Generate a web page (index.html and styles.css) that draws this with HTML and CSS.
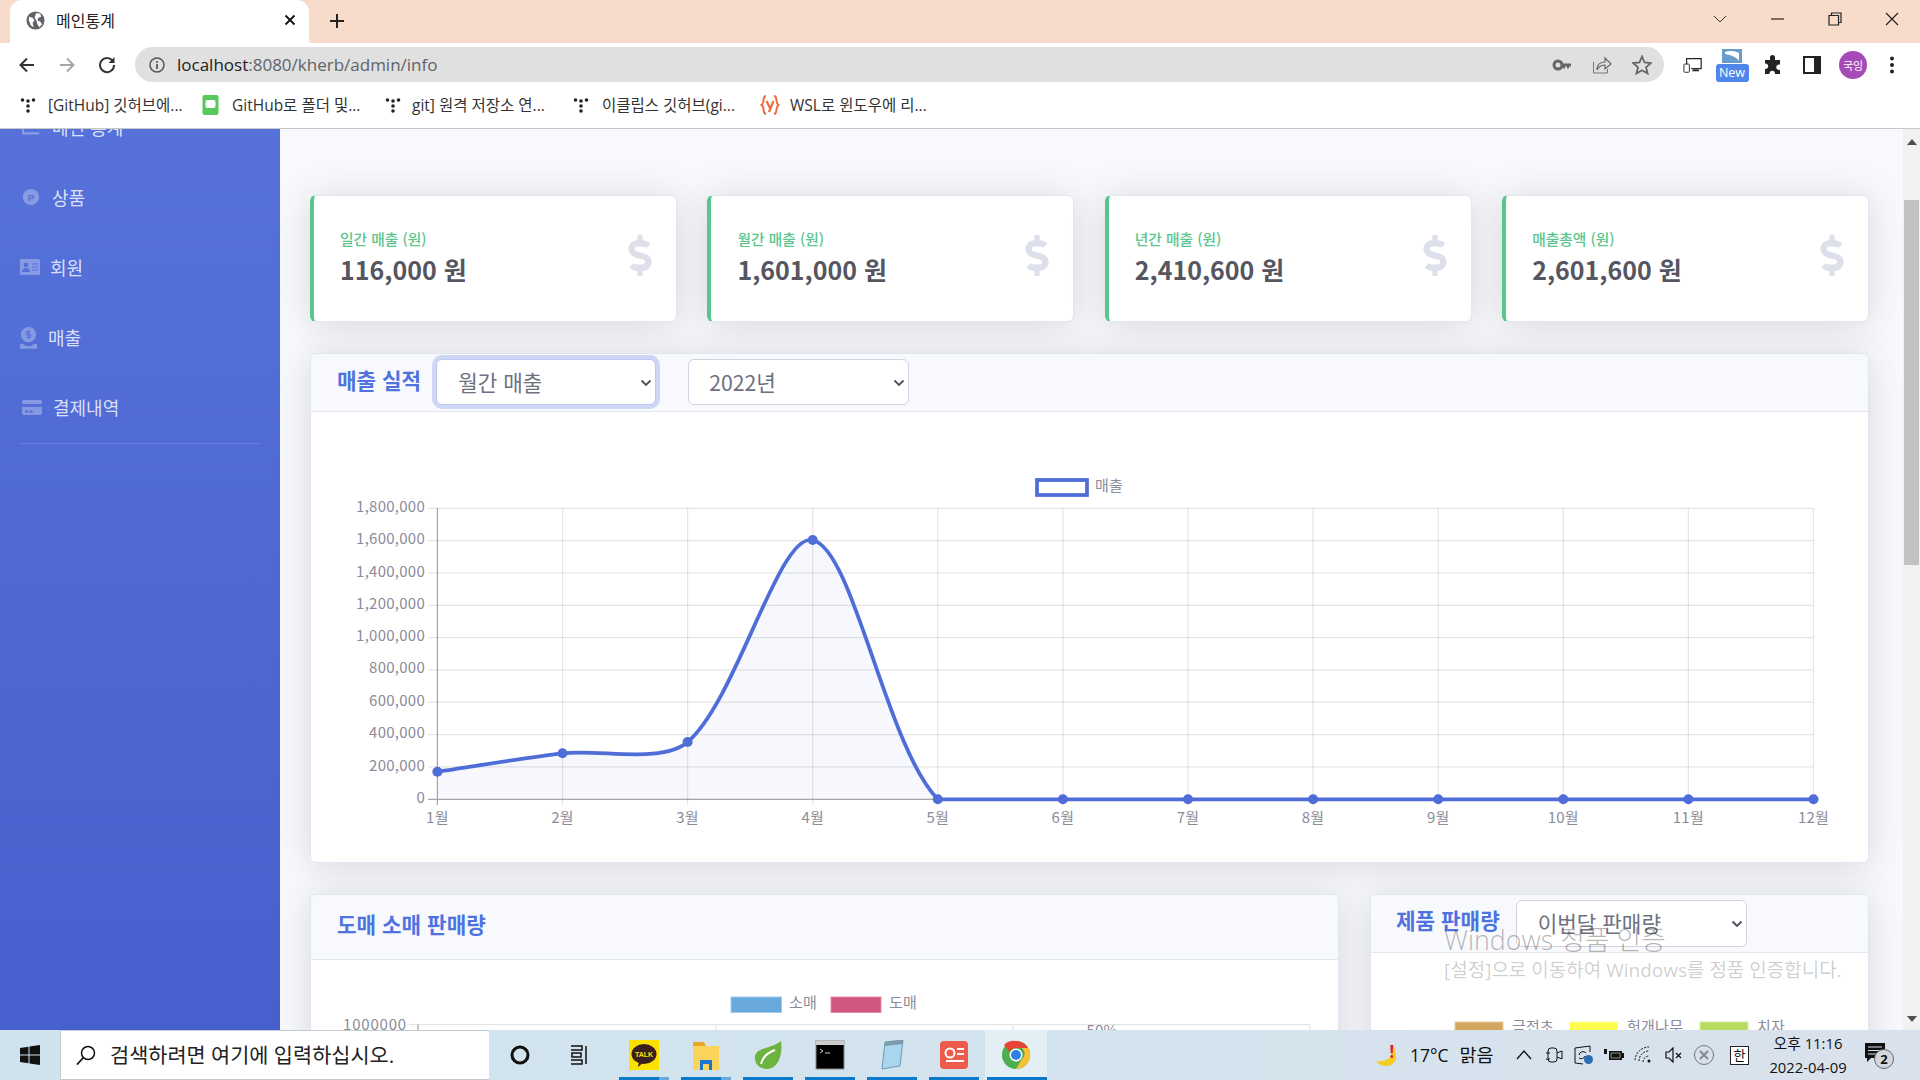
FILE: index.html
```html
<!DOCTYPE html>
<html lang="ko">
<head>
<meta charset="utf-8">
<title>메인통계</title>
<link rel="stylesheet" href="styles.css">
</head>
<body>
<svg class="defs" width="0" height="0" aria-hidden="true">
  <symbol id="dots" viewBox="0 0 16 16"><circle cx="2.5" cy="3" r="1.8"/><circle cx="8" cy="4" r="1.8"/><circle cx="13.500" cy="3" r="1.8"/><circle cx="8" cy="9" r="1.8"/><circle cx="8" cy="14" r="1.8"/></symbol>
  <symbol id="dollar" viewBox="0 0 288 512"><path d="M209.2 233.4l-108-31.6C88.7 198.2 80 186.5 80 173.5c0-16.3 13.2-29.5 29.5-29.5h66.3c12.2 0 24.2 3.7 34.2 10.5 6.1 4.1 14.3 3.1 19.5-2l34.8-34c7.1-6.9 6.1-18.4-1.8-24.5C238 74.8 207.4 64.1 176 64V16c0-8.8-7.2-16-16-16h-32c-8.8 0-16 7.2-16 16v48h-2.5C45.8 64-5.4 118.7.5 183.6c4.2 46.1 39.4 83.6 83.8 96.6l102.5 30c12.5 3.7 21.2 15.3 21.2 28.3 0 16.3-13.2 29.5-29.5 29.5h-66.3C100 368 88 364.3 78 357.5c-6.1-4.1-14.3-3.1-19.5 2l-34.8 34c-7.1 6.9-6.1 18.4 1.8 24.5 24.5 19.2 55.1 29.9 86.5 30v48c0 8.8 7.2 16 16 16h32c8.8 0 16-7.2 16-16v-48.2c46.6-.9 90.3-28.6 105.7-72.7 21.5-61.6-14.6-124.8-72.5-141.7z"/></symbol>
  <symbol id="chev" viewBox="0 0 12 8"><path d="M1.500 1.500 6 6l4.500-4.500" fill="none" stroke="#4d4f5c" stroke-width="1.800"/></symbol>
</svg>

<header class="tabstrip">
  <div class="tab">
    <svg class="tab-fav" viewBox="0 0 20 20"><circle cx="10" cy="10" r="9.500" fill="#5f6368"/><path d="M3 6l4 1 2 3-2 2 1 5-3-2-2-5zM11 2l4 1 1 3-3 1-1 3 3 1 2 3-3 3-2-3-1-4-2-3 1-3z" fill="#fff"/></svg>
    <span class="tab-title">메인통계</span>
    <svg class="tab-x" viewBox="0 0 12 12"><path d="M1.500 1.500l9 9M10.500 1.500l-9 9" stroke="#111" stroke-width="1.800"/></svg>
  </div>
  <svg class="tab-plus" viewBox="0 0 14 14"><path d="M7 0v14M0 7h14" stroke="#222" stroke-width="2"/></svg>
  <div class="win-ctrls">
    <svg class="wc" viewBox="0 0 14 14"><path d="M1 4l6 6 6-6" fill="none" stroke="#333"/></svg>
    <svg class="wc" viewBox="0 0 14 14"><path d="M1 7h13" stroke="#222" stroke-width="1.200"/></svg>
    <svg class="wc" viewBox="0 0 14 14"><path d="M1 3.500h9.500v9.500H1zM3.500 3.500V1H13v9.500h-2.500" fill="none" stroke="#222" stroke-width="1.200"/></svg>
    <svg class="wc" viewBox="0 0 14 14"><path d="M1 1l12 12M13 1L1 13" stroke="#222" stroke-width="1.200"/></svg>
  </div>
</header>

<div class="toolbar">
  <svg class="nav-ic" viewBox="0 0 18 18"><path d="M16 9H3M9 2.500 2.500 9 9 15.500" fill="none" stroke="#333" stroke-width="2"/></svg>
  <svg class="nav-ic" viewBox="0 0 18 18"><path d="M2 9h13M9 2.500 15.500 9 9 15.500" fill="none" stroke="#a6a6a6" stroke-width="2"/></svg>
  <svg class="nav-ic" viewBox="0 0 18 18"><path d="M15 5.500A7 7 0 1 0 16 9" fill="none" stroke="#333" stroke-width="2"/><path d="M16.500 1v6h-6z" fill="#333"/></svg>
  <div class="omnibox">
    <svg class="info" viewBox="0 0 16 16"><circle cx="8" cy="8" r="7" fill="none" stroke="#555" stroke-width="1.500"/><path d="M8 7v5M8 4v1.800" stroke="#555" stroke-width="1.700"/></svg>
    <span class="url"><span class="url-host">localhost</span>:8080/kherb/admin/info</span>
    <svg class="omni-ic" viewBox="0 0 20 20"><circle cx="6" cy="10" r="4" fill="none" stroke="#666" stroke-width="3"/><path d="M9 8.500h10v3h-2v2h-2v-2h-2v2h-2v-2H9z" fill="#666"/></svg>
    <svg class="omni-ic" viewBox="0 0 20 20"><path d="M1.500 7v11h14v-4" fill="none" stroke="#777" stroke-width="1"/><path d="M5 15c0-6 4-8 8-8V3l6 6-6 5V10c-4 0-6 1-8 5z" fill="none" stroke="#666" stroke-width="1.200"/></svg>
    <svg class="omni-ic omni-last" viewBox="0 0 20 20"><path d="M10 1.500l2.500 6 6.500.5-5 4.300 1.600 6.200L10 15.300l-5.600 3.200L6 12.300 1 8l6.500-.5z" fill="none" stroke="#666" stroke-width="1.800"/></svg>
  </div>
  <div class="ext-row">
    <svg class="ext" viewBox="0 0 22 20"><path d="M4 12V3h16v11H9" fill="none" stroke="#222" stroke-width="1.300"/><rect x="1" y="9" width="6" height="9" rx="1" fill="#fff" stroke="#222"/><path d="M11 15h6l1 2h-8z" fill="#222"/></svg>
    <div class="ext-new"><svg class="ext-new-ic" viewBox="0 0 20 14"><rect width="20" height="14" fill="#6a9ccb"/><path d="M3 3c6-2 10-1 14 1v8c-3-4-8-6-14-7z" fill="#fff"/></svg><span class="ext-badge">New</span></div>
    <svg class="ext" viewBox="0 0 20 20"><path d="M7 2.500a2.500 2.500 0 0 1 5 0V5h5v4.500h-1.500a2.800 2.800 0 0 0 0 5.500H17v4h-5v-1a2.800 2.800 0 0 0-5.500 0v1H2v-5h1a2.800 2.800 0 0 0 0-5.500H2V5h5z" fill="#222"/></svg>
    <svg class="ext" viewBox="0 0 20 20"><rect x="1" y="1" width="18" height="18" fill="#222"/><rect x="3" y="3" width="9" height="14" fill="#fff"/></svg>
    <span class="avatar">국잉</span>
    <svg class="ext" viewBox="0 0 20 20"><circle cx="10" cy="3.500" r="2" fill="#222"/><circle cx="10" cy="10" r="2" fill="#222"/><circle cx="10" cy="16.500" r="2" fill="#222"/></svg>
  </div>
</div>

<nav class="bookmarks">
  <a class="bm bm-1"><svg class="bm-ic"><use href="#dots"/></svg><span>[GitHub] 깃허브에...</span></a>
  <a class="bm bm-2"><svg class="bm-ic" viewBox="0 0 16 20"><rect width="16" height="20" rx="2" fill="#5ac85a"/><rect x="3" y="5" width="10" height="8" rx="2" fill="#fff"/></svg><span>GitHub로 폴더 및...</span></a>
  <a class="bm bm-3"><svg class="bm-ic"><use href="#dots"/></svg><span>git] 원격 저장소 연...</span></a>
  <a class="bm bm-4"><svg class="bm-ic"><use href="#dots"/></svg><span>이클립스 깃허브(gi...</span></a>
  <a class="bm bm-5"><svg class="bm-ic bm-ic-y" viewBox="0 0 20 20"><path d="M6 1C2 1 5 8 1.500 10 5 12 2 19 6 19M14 1c4 0 1 7 4.500 9-3.500 2-.5 9-4.500 9" fill="none" stroke="#ef6c3e" stroke-width="2"/><path d="M6.500 6l3.500 7M13.500 6 9 17" fill="none" stroke="#ef6c3e" stroke-width="2.200"/></svg><span>WSL로 윈도우에 리...</span></a>
</nav>

<div class="page">
  <aside class="sidebar">
    <ul class="side-nav">
      <li class="side-item">
        <svg class="side-ic" viewBox="0 0 20 16"><path d="M1 1v14h18M5 5h10M5 9h10" fill="none" stroke="currentColor" stroke-width="2.500"/></svg>
        <span>메인 통계</span>
      </li>
      <li class="side-item">
        <svg class="side-ic" viewBox="0 0 20 20"><circle cx="10" cy="10" r="9" fill="currentColor"/><text x="10" y="14.500" class="side-p">P</text></svg>
        <span>상품</span>
      </li>
      <li class="side-item side-tight">
        <svg class="side-ic" viewBox="0 0 20 16"><rect width="20" height="16" rx="1.500" fill="currentColor"/><circle cx="6" cy="6" r="2.300" fill="#5270d8"/><path d="M2.500 12.500c0-4 7-4 7 0zM12 5h6M12 8h6M12 11h6" fill="#5270d8" stroke="#5270d8"/></svg>
        <span>회원</span>
      </li>
      <li class="side-item side-tighter">
        <svg class="side-ic side-ic-hand" viewBox="0 0 18 24"><circle cx="9" cy="9" r="8" fill="currentColor"/><path d="M0 19h3l3 2h6l3-2h3v5H0z" fill="currentColor"/><path d="M11 6H8a1.500 1.500 0 0 0 0 3h2a1.500 1.500 0 0 1 0 3H7M9 4.500v9" fill="none" stroke="#5270d8" stroke-width="1.200"/></svg>
        <span>매출</span>
      </li>
      <li class="side-item">
        <svg class="side-ic" viewBox="0 0 20 15"><path d="M2 0h16a2 2 0 0 1 2 2v2H0V2a2 2 0 0 1 2-2zM0 7h20v6a2 2 0 0 1-2 2H2a2 2 0 0 1-2-2zM3 10.500v2h3v-2zM7.500 10.500v2h3v-2z" fill="currentColor" fill-rule="evenodd"/></svg>
        <span>결제내역</span>
      </li>
    </ul>
    <hr class="side-div">
  </aside>

  <main class="main">
    <section class="stats">
      <article class="stat">
        <div class="stat-text"><div class="stat-label">일간 매출 (원)</div><div class="stat-value">116,000 원</div></div>
        <svg class="stat-ic"><use href="#dollar"/></svg>
      </article>
      <article class="stat">
        <div class="stat-text"><div class="stat-label">월간 매출 (원)</div><div class="stat-value">1,601,000 원</div></div>
        <svg class="stat-ic"><use href="#dollar"/></svg>
      </article>
      <article class="stat">
        <div class="stat-text"><div class="stat-label">년간 매출 (원)</div><div class="stat-value">2,410,600 원</div></div>
        <svg class="stat-ic"><use href="#dollar"/></svg>
      </article>
      <article class="stat">
        <div class="stat-text"><div class="stat-label">매출총액 (원)</div><div class="stat-value">2,601,600 원</div></div>
        <svg class="stat-ic"><use href="#dollar"/></svg>
      </article>
    </section>

    <section class="card card-chart">
      <div class="card-head head-sales">
        <h6 class="card-title">매출 실적</h6>
        <div class="sel sel-month focus"><span class="sel-text">월간 매출</span><svg class="sel-chev"><use href="#chev"/></svg></div>
        <div class="sel sel-year"><span class="sel-text">2022년</span><svg class="sel-chev"><use href="#chev"/></svg></div>
      </div>
      <svg class="chart" viewBox="311 412 1557 449">
        <path class="grid" d="M428 508.300H1813.500M428 540.600H1813.500M428 572.900H1813.500M428 605.300H1813.500M428 637.600H1813.500M428 669.900H1813.500M428 702.200H1813.500M428 734.600H1813.500M428 766.900H1813.500"/>
        <path class="grid" d="M562.500 508.300V805M687.600 508.300V805M812.700 508.300V805M937.800 508.300V805M1062.900 508.300V805M1188 508.300V805M1313.100 508.300V805M1438.200 508.300V805M1563.300 508.300V805M1688.400 508.300V805M1813.500 508.300V805"/>
        <path class="axis" d="M428 799.300H1813.500M437.400 508.300V805"/>
        <path class="area" d="M437.400 771.700C474.900 766.200 524.850 757.770 562.500 753.300 599.900 748.860 661.650 764.100 687.600 742 736.700 700.100 778.750 532.200 812.700 540 853.800 549.400 885.500 745.100 937.800 799.300H437.400Z"/>
        <path class="line" d="M437.400 771.700C474.900 766.200 524.850 757.770 562.500 753.300 599.900 748.860 661.650 764.100 687.600 742 736.700 700.100 778.750 532.200 812.700 540 853.800 549.400 885.500 745.100 937.800 799.300H1813.500"/>
        <g class="pts">
          <circle cx="437.400" cy="771.700" r="5"/><circle cx="562.500" cy="753.300" r="5"/><circle cx="687.600" cy="742" r="5"/><circle cx="812.700" cy="540" r="5"/><circle cx="937.800" cy="799.300" r="5"/><circle cx="1062.900" cy="799.300" r="5"/><circle cx="1188" cy="799.300" r="5"/><circle cx="1313.100" cy="799.300" r="5"/><circle cx="1438.200" cy="799.300" r="5"/><circle cx="1563.300" cy="799.300" r="5"/><circle cx="1688.400" cy="799.300" r="5"/><circle cx="1813.500" cy="799.300" r="5"/>
        </g>
        <rect class="leg-line" x="1037" y="480" width="50" height="15"/>
        <text class="t" x="1095" y="491">매출</text>
        <g class="t end">
          <text x="425" y="512">1,800,000</text><text x="425" y="544">1,600,000</text><text x="425" y="576.500">1,400,000</text><text x="425" y="609">1,200,000</text><text x="425" y="641">1,000,000</text><text x="425" y="673">800,000</text><text x="425" y="705.500">600,000</text><text x="425" y="738">400,000</text><text x="425" y="770.500">200,000</text><text x="425" y="802.500">0</text>
        </g>
        <g class="t mid">
          <text x="437.400" y="823">1월</text><text x="562.500" y="823">2월</text><text x="687.600" y="823">3월</text><text x="812.700" y="823">4월</text><text x="937.800" y="823">5월</text><text x="1062.900" y="823">6월</text><text x="1188" y="823">7월</text><text x="1313.100" y="823">8월</text><text x="1438.200" y="823">9월</text><text x="1563.300" y="823">10월</text><text x="1688.400" y="823">11월</text><text x="1813.500" y="823">12월</text>
        </g>
      </svg>
    </section>

    <section class="row-bottom">
      <div class="card">
        <div class="card-head head-tall"><h6 class="card-title">도매 소매 판매량</h6></div>
        <svg class="chart" viewBox="311 960 1027 200">
          <rect x="731" y="997" width="50.500" height="15.500" fill="#68a9dc" stroke="#a3c9e9"/>
          <text class="t" x="789" y="1008">소매</text>
          <rect x="831" y="997" width="50" height="15.500" fill="#d0587e" stroke="#e48aa7"/>
          <text class="t" x="889" y="1008">도매</text>
          <path class="grid" d="M409 1024.500H1310M716 1024.500V1100M1013 1024.500V1100M1310 1024.500V1100"/>
          <path class="axis" d="M418 1024.500V1100"/>
          <text class="t end t-wide" x="407" y="1030">1000000</text>
          <text class="t mid" x="1102" y="1036">50%</text>
        </svg>
      </div>
      <div class="card">
        <div class="card-head head-product">
          <h6 class="card-title">제품 판매량</h6>
          <div class="sel sel-product"><span class="sel-text">이번달 판매량</span><svg class="sel-chev"><use href="#chev"/></svg></div>
        </div>
        <svg class="chart" viewBox="1371 953 497 200">
          <rect x="1455" y="1022" width="48" height="15" fill="#d4a55c" stroke="#e6cb9e"/>
          <text class="t" x="1512" y="1032">금전초</text>
          <rect x="1569.500" y="1022" width="48" height="15" fill="#fdfd4d" stroke="#feffa0"/>
          <text class="t" x="1627" y="1032">헛개나무</text>
          <rect x="1700" y="1022" width="48" height="15" fill="#b6dd5f" stroke="#d6eba0"/>
          <text class="t" x="1757" y="1032">치자</text>
        </svg>
      </div>
    </section>
  </main>

  <div class="scrollbar">
    <svg class="sb-arrow" viewBox="0 0 10 6"><path d="M5 0l5 6H0z" fill="#505050"/></svg>
    <div class="sb-track"><div class="sb-thumb"></div></div>
    <svg class="sb-arrow sb-down" viewBox="0 0 10 6"><path d="M5 6L0 0h10z" fill="#505050"/></svg>
  </div>

  <div class="watermark">
    <div class="wm-title">Windows 정품 인증</div>
    <div class="wm-sub">[설정]으로 이동하여 Windows를 정품 인증합니다.</div>
  </div>
</div>

<footer class="taskbar">
  <div class="tb-start"><svg class="win-logo" viewBox="0 0 20 20"><path d="M0 3l8.500-1.300V9.500H0zM9.500 1.500 20 0v9.500H9.500zM0 10.500h8.500v7.800L0 17zM9.500 10.500H20V20L9.500 18.500z" fill="#111"/></svg></div>
  <div class="tb-search">
    <svg class="search-ic" viewBox="0 0 20 20"><circle cx="12" cy="8" r="6.500" fill="none" stroke="#111" stroke-width="1.500"/><path d="M7.500 12.500 1 19.500" stroke="#111" stroke-width="1.800"/></svg>
    <span>검색하려면 여기에 입력하십시오.</span>
  </div>
  <div class="tb-cell"><svg class="tb-c" viewBox="0 0 20 20"><circle cx="10" cy="10" r="8" fill="none" stroke="#111" stroke-width="3"/></svg></div>
  <div class="tb-cell tb-view"><svg class="tb-c" viewBox="0 0 20 20"><path d="M2 1h11v4H2M2 19h11v-4H2M3 8h9v4H3zM17 1v18" fill="none" stroke="#111" stroke-width="1.500"/></svg></div>
  <div class="tb-cell on split"><svg class="tb-app" viewBox="0 0 30 30"><rect width="30" height="30" fill="#fae100"/><ellipse cx="15" cy="14" rx="12.500" ry="10" fill="#3b1e1e"/><path d="M10 21l-1 6 6-5z" fill="#3b1e1e"/><text x="15" y="17" class="talk">TALK</text></svg></div>
  <div class="tb-cell on split"><svg class="tb-app" viewBox="0 0 30 30"><path d="M2 2h11l2 4H2z" fill="#e9a825"/><path d="M2 6h26v24H2z" fill="#fbd45c"/><path d="M9 20h12v10h-3v-6h-6v6H9z" fill="#1977d2"/></svg></div>
  <div class="tb-cell on"><svg class="tb-app" viewBox="0 0 30 30"><path d="M28 1c2 14-3 28-14 28C6 29 1 23 2 16 4 7 18 9 28 1z" fill="#6db33f"/><path d="M8 24c2-8 8-12 14-14" fill="none" stroke="#fff" stroke-width="2"/></svg></div>
  <div class="tb-cell on"><svg class="tb-app" viewBox="0 0 30 30"><rect x="1" y="1" width="28" height="28" fill="#000" stroke="#888"/><rect x="1" y="1" width="28" height="4" fill="#ccc"/><path d="M5 9l3 2-3 2M10 13h5" fill="none" stroke="#ccc"/></svg></div>
  <div class="tb-cell on"><svg class="tb-app" viewBox="0 0 30 30"><path d="M8 2 26 0l-3 26-18 3z" fill="#a9d5ee" stroke="#6c9ab5"/><path d="M8 2 26 0v4L8 6z" fill="#7f9aa8"/></svg></div>
  <div class="tb-cell on"><svg class="tb-app" viewBox="0 0 30 30"><rect x="1" y="1" width="28" height="28" rx="4" fill="#ef5b4b"/><circle cx="11" cy="13" r="4.500" fill="none" stroke="#fff" stroke-width="2"/><path d="M18 9h7M18 14h7M7 21h18" stroke="#fff" stroke-width="2"/></svg></div>
  <div class="tb-cell on active"><svg class="tb-app" viewBox="0 0 30 30"><circle cx="15" cy="15" r="14" fill="#4caf50"/><path d="M15 1a14 14 0 0 1 12.100 7H15a7 7 0 0 0-6.500 4L3 5a14 14 0 0 1 12-4z" fill="#ea4335"/><path d="M27.100 8A14 14 0 0 1 15 29l6-10a7 7 0 0 0 0-11z" fill="#fbc02d"/><circle cx="15" cy="15" r="6.500" fill="#fff"/><circle cx="15" cy="15" r="5" fill="#2f7fe6"/></svg></div>
  <div class="tb-spacer"></div>
  <div class="tray">
    <div class="weather">
      <svg class="moon" viewBox="0 0 24 26"><path d="M19 1c3 11-3 19-17 18 5 7 20 8 21-5 0-5-1-9-4-13z" fill="#f5cc22"/><path d="M17 2h3l-.5 9h-2z" fill="#e02030"/><circle cx="18.500" cy="14" r="1.500" fill="#e02030"/></svg>
      <span class="temp">17°C</span><span class="cond">맑음</span>
    </div>
    <svg class="tr" viewBox="0 0 20 20"><path d="M3 14l7-8 7 8" fill="none" stroke="#111" stroke-width="1.300"/></svg>
    <svg class="tr" viewBox="0 0 20 20"><rect x="4" y="3" width="9" height="14" rx="3" fill="none" stroke="#111"/><path d="M13 8l5-2v8l-5-2M2 8h4M2 14h4" fill="none" stroke="#111"/></svg>
    <svg class="tr" viewBox="0 0 20 20"><path d="M1 3l15-2v6M1 3v15l8 1" fill="none" stroke="#111"/><path d="M5 10a4 4 0 0 1 7-2M11 11a4 4 0 0 1-6 2" fill="none" stroke="#111"/><circle cx="14.500" cy="14.500" r="4.500" fill="#2b6db5"/></svg>
    <svg class="tr" viewBox="0 0 20 20"><path d="M0 4h3v5H0zM5 6h13v9H5zM18 8h2v5h-2z" fill="#111"/><path d="M7 8h9v5H7z" fill="none" stroke="#ddd" stroke-width=".6"/></svg>
    <svg class="tr" viewBox="0 0 20 20"><path d="M1 15A14 14 0 0 1 15 2M5 16a10 10 0 0 1 10-10M9 17a6 6 0 0 1 6-6" fill="none" stroke="#111" stroke-dasharray="2 1.200"/><circle cx="15" cy="16" r="1.500" fill="#111"/></svg>
    <svg class="tr" viewBox="0 0 20 20"><path d="M2 7h3l4-4v14l-4-4H2z" fill="none" stroke="#111" stroke-width="1.200"/><path d="M12 8l5 5M17 8l-5 5" stroke="#111" stroke-width="1.200"/></svg>
    <svg class="tr" viewBox="0 0 20 20"><circle cx="10" cy="10" r="9.500" fill="none" stroke="#777"/><path d="M6 6l8 8M14 6l-8 8" stroke="#888" stroke-width="2"/></svg>
    <div class="ime"><span>한</span></div>
    <div class="clock"><div>오후 11:16</div><div>2022-04-09</div></div>
    <div class="notif">
      <svg class="notif-ic" viewBox="0 0 20 20"><path d="M0 0h20v15H6l-4 4v-4H0z" fill="#111"/><path d="M3 4h14M3 7.500h14M3 11h10" stroke="#dde" stroke-width="1.200"/></svg>
      <span class="notif-badge">2</span>
    </div>
  </div>
</footer>
</body>
</html>
```

FILE: styles.css
```css
* { box-sizing: border-box; }
html, body { margin: 0; height: 1080px; overflow: hidden; }
body {
  width: 1920px;
  font-family: "Noto Sans CJK KR", "Noto Sans", sans-serif;
  color: #222;
  background: #fff;
  display: flex;
  flex-direction: column;
}
.defs { position: absolute; }
svg { display: block; flex: none; }
ul { list-style: none; margin: 0; padding: 0; }
h6 { margin: 0; }

/* browser chrome */
.tabstrip {
  height: 43px;
  flex: none;
  background: #f7dccb;
  display: flex;
  align-items: flex-end;
  padding-left: 10px;
}
.tab {
  width: 299px;
  height: 43px;
  background: #fff;
  border-radius: 12px 12px 0 0;
  display: flex;
  align-items: center;
  padding-left: 16px;
  padding-bottom: 3px;
}
.tab-fav { width: 19px; height: 19px; }
.tab-title { font-size: 16px; line-height: 20px; margin-left: 11px; flex: 1; }
.tab-x { width: 12px; height: 12px; margin-right: 13px; }
.tab-plus { width: 14px; height: 14px; margin: 0 0 15px 21px; }
.win-ctrls { margin-left: auto; align-self: stretch; display: flex; padding: 12px 21px 0 0; gap: 43.500px; }
.wc { width: 14px; height: 14px; }

.toolbar {
  height: 43px;
  flex: none;
  display: flex;
  align-items: center;
  padding-left: 18px;
  gap: 22px;
  background: #fff;
}
.nav-ic { width: 18px; height: 18px; }
.omnibox {
  flex: none;
  width: 1529px;
  height: 35px;
  margin-left: -3px;
  background: #e0e0e0;
  border-radius: 18px;
  display: flex;
  align-items: center;
  padding-left: 14px;
}
.info { width: 16px; height: 16px; }
.url {
  margin-left: 12px;
  font-family: "Open Sans", sans-serif;
  font-size: 17px;
  line-height: 20px;
  color: #5f6368;
  flex: 1;
}
.url-host { color: #222; }
.omni-ic { width: 20px; height: 20px; margin-right: 20px; }
.omni-last { margin-right: 12px; }
.ext-row { display: flex; flex: none; align-items: center; margin-left: -3px; }
.ext { width: 20px; height: 20px; margin-right: 19px; }
.ext-new { width: 33px; height: 33px; margin: 0 14.500px -1px -6.500px; position: relative; flex: none; }
.ext-new-ic { width: 20px; height: 14px; margin: 0 0 0 6px; }
.ext-badge {
  position: absolute; left: 0; top: 15px; width: 33px; height: 18px;
  background: #4f86ec; color: #fff; border-radius: 3px;
  font-family: "Open Sans", sans-serif; font-size: 12.500px; line-height: 18px; text-align: center;
}
.avatar {
  width: 28px; height: 28px; border-radius: 50%;
  background: #a64ab7; color: #fff;
  font-size: 11px; line-height: 28px; text-align: center;
  margin: 0 15px 0 -2px;
  flex: none;
}

.bookmarks {
  height: 43px;
  flex: none;
  position: relative;
  display: flex;
  align-items: center;
  padding-bottom: 5px;
  background: #fff;
  border-bottom: 1px solid #c8c8c8;
  font-family: "Open Sans", "Noto Sans CJK KR", sans-serif;
  font-size: 15.500px;
  color: #333;
}
.bm { display: flex; align-items: center; line-height: 20px; white-space: nowrap; flex: none; }
.bm-ic { width: 16px; height: 16px; margin-right: 12px; fill: #222; }
.bm-1 { width: 201px; padding-left: 20px; }
.bm-2 { width: 184px; }
.bm-2 .bm-ic { width: 19px; height: 20px; }
.bm-3 { width: 188px; }
.bm-4 { width: 187px; }
.bm-4 .bm-ic { margin-right: 13px; }
.bm-3 .bm-ic { margin-right: 11px; }
.bm-ic-y { width: 20px; height: 20px; margin-right: 10px; }

/* page */
.page {
  flex: 1;
  min-height: 0;
  display: flex;
  position: relative;
  overflow: hidden;
  background: #f8f9fc;
}
.sidebar {
  width: 280px;
  flex: none;
  background: linear-gradient(180deg, #5672da 0%, #4660cd 100%);
  color: rgba(255, 255, 255, .8);
  font-size: 18px;
  padding: 0 20px;
}
.side-nav { margin-top: -37px; }
.side-item {
  height: 70px;
  display: flex;
  align-items: center;
  gap: 12px;
  padding-left: 2px;
  line-height: 24px;
}
.side-ic { width: 18px; height: 18px; color: rgba(255, 255, 255, .3); }
.side-p { font-family: "Liberation Sans", sans-serif; font-size: 11px; font-weight: 700; fill: #5270d8; text-anchor: middle; }
.side-tight { padding-left: 0; }
.side-tight .side-ic { width: 20px; height: 16px; margin-right: -2px; }
.side-tighter { padding-left: 0; }
.side-ic-hand { width: 17px; height: 23px; margin-right: -1px; }
.side-item:last-child .side-ic { width: 20px; height: 15px; margin-right: -1px; }
.side-div { border: 0; border-top: 1px solid rgba(255, 255, 255, .15); margin: 1px 0 0; }

.main {
  width: 1623px;
  flex: none;
  padding: 65.500px 34px 0 30px;
}
.stats { display: grid; grid-template-columns: repeat(4, 1fr); gap: 30.500px; }
.stat {
  height: 127px;
  background: #fff;
  border: 1px solid #e3e6f0;
  border-left: 4.500px solid #5ac58e;
  border-radius: 6px;
  box-shadow: 0 3px 35px rgba(58, 59, 69, .17);
  display: flex;
  align-items: center;
  justify-content: space-between;
  padding: 0 24px 0 26px;
}
.stat-label { font-size: 14.750px; line-height: 20px; font-weight: 500; color: #5ac58e; }
.stat-value { font-size: 25px; line-height: 36px; font-weight: 700; color: #55565f; margin-top: 2px; }
.stat-ic { width: 24px; height: 41px; fill: #dddfeb; margin-bottom: 5px; }

.card {
  background: #fff;
  border: 1px solid #e3e6f0;
  border-radius: 6px;
  box-shadow: 0 3px 35px rgba(58, 59, 69, .17);
  overflow: hidden;
}
.card-chart { margin-top: 31.500px; height: 510px; }
.card-head {
  background: #f8f9fc;
  border-bottom: 1px solid #e3e6f0;
  display: flex;
  align-items: center;
  padding-left: 26px;
}
.head-sales { height: 58px; }
.head-sales .card-title { margin-bottom: 5px; }
.head-tall { height: 65px; padding-bottom: 5px; }
.head-product { height: 58px; padding-left: 25px; }
.head-product .card-title { margin-bottom: 6px; }
.card-title { font-size: 21.250px; line-height: 26px; font-weight: 700; color: #4e73df; white-space: nowrap; }
.chart { width: 100%; display: block; }

.sel {
  position: relative;
  height: 46px;
  border: 1px solid #d1d3e2;
  border-radius: 6px;
  background: #fff;
  display: flex;
  align-items: center;
  font-size: 21.250px;
  color: #6e707e;
  flex: none;
}
.sel-text { line-height: 26px; }
.sel-chev { position: absolute; right: 3px; top: 19px; width: 12px; height: 8px; }
.sel-month { width: 220px; margin-left: 15px; padding-left: 21px; margin-bottom: 2px; }
.sel.focus { border-color: #bac8f3; box-shadow: 0 0 0 4px rgba(78, 115, 223, .25); }
.sel-year { width: 221px; margin-left: 32px; padding-left: 20px; margin-bottom: 2px; }
.sel-product { width: 231px; height: 47px; margin-left: 16px; padding-left: 21px; }

.row-bottom {
  display: grid;
  grid-template-columns: 1029fr 499fr;
  gap: 31px;
  margin-top: 30.500px;
}

.grid { stroke: rgba(0, 0, 0, .1); stroke-width: 1.250; fill: none; }
.axis { stroke: rgba(0, 0, 0, .35); stroke-width: 1.250; fill: none; }
.area { fill: rgba(78, 115, 223, .05); }
.line { stroke: #4e6dd9; stroke-width: 3.750; fill: none; }
.pts { fill: #4e6dd9; }
.leg-line { fill: #fff; stroke: #4e6dd9; stroke-width: 3.750; }
.t { font-family: "Noto Sans CJK KR", sans-serif; font-size: 15px; letter-spacing: .25px; fill: #8b8c9a; }
.t-wide { letter-spacing: .8px; }
.end text, .t.end { text-anchor: end; }
.mid text, .t.mid { text-anchor: middle; }

.scrollbar { width: 17px; flex: none; background: #f1f1f1; display: flex; flex-direction: column; }
.sb-arrow { width: 10px; height: 6px; margin: 10px auto 1px; }
.sb-down { margin: 3px auto 8px; }
.sb-track { flex: 1; padding: 54px 1px 0; }
.sb-thumb { height: 365px; background: #c1c1c1; }

.watermark { position: absolute; left: 1444px; top: 793px; color: rgba(0, 0, 0, .3); font-family: "Open Sans", "Noto Sans CJK KR", sans-serif; white-space: nowrap; }
.wm-title { font-size: 26.800px; line-height: 36px; font-weight: 300; }
.wm-sub { font-size: 19px; line-height: 24px; margin-top: 0; color: rgba(0, 0, 0, .2); }

/* taskbar */
.taskbar {
  height: 50px;
  flex: none;
  display: flex;
  background: linear-gradient(90deg, #cfe3ee 0%, #d3e4ee 50%, #d9e1ec 100%);
  font-family: "Open Sans", "Noto Sans CJK KR", sans-serif;
}
.tb-start { width: 60px; display: flex; align-items: center; justify-content: center; flex: none; }
.win-logo { width: 20px; height: 20px; }
.tb-search {
  width: 429px;
  flex: none;
  background: #fff;
  border: 1px solid #c4cbd0;
  border-width: 1px 0 1px 1px;
  display: flex;
  align-items: center;
  padding-left: 15px;
  gap: 14px;
  font-size: 20.800px;
  line-height: 24px;
  color: #222;
  white-space: nowrap;
}
.search-ic { width: 20px; height: 20px; }
.tb-cell { width: 62px; display: flex; align-items: center; justify-content: center; position: relative; flex: none; }
.tb-view { padding-right: 6px; }
.tb-cell.on::after { content: ""; position: absolute; left: 6px; right: 6px; bottom: 0; height: 3px; background: #0b79c9; }
.tb-cell.split::before { content: ""; position: absolute; right: 6px; width: 10px; bottom: 0; height: 3px; background: #6aa9dd; z-index: 1; }
.tb-cell.active { background: #e4eef5; }
.tb-cell.active::after { left: 2px; right: 0; }
.tb-c { width: 20px; height: 20px; }
.tb-app { width: 30px; height: 30px; }
.talk { font-family: "Liberation Sans", sans-serif; font-size: 7px; font-weight: 700; fill: #fae100; text-anchor: middle; }
.tb-spacer { flex: 1; }
.tray { display: flex; align-items: center; width: 546px; flex: none; color: #111; }
.weather { width: 135px; display: flex; align-items: center; flex: none; }
.moon { width: 23px; height: 25px; margin-right: 13px; }
.temp { font-size: 17.500px; line-height: 24px; margin-right: 11px; }
.cond { font-size: 18.500px; line-height: 24px; white-space: nowrap; }
.tr { width: 20px; height: 20px; margin: 0 5px; }
.ime { width: 19px; height: 19px; border: 1px solid #222; background: #fff; font-size: 13px; line-height: 17px; text-align: center; margin: 0 4px 0 11px; flex: none; }
.clock { width: 110px; text-align: center; font-size: 14.800px; line-height: 24px; flex: none; }
.notif { position: relative; flex: none; width: 40px; height: 30px; margin-left: 2px; }
.notif-ic { width: 20px; height: 20px; position: absolute; left: 0; top: 3px; }
.notif-badge {
  position: absolute; left: 9px; top: 9px; width: 20px; height: 20px;
  border-radius: 50%; background: #d3d7dd; border: 1px solid #666;
  font-size: 13px; font-weight: 700; line-height: 18px; text-align: center; color: #111;
}
```
